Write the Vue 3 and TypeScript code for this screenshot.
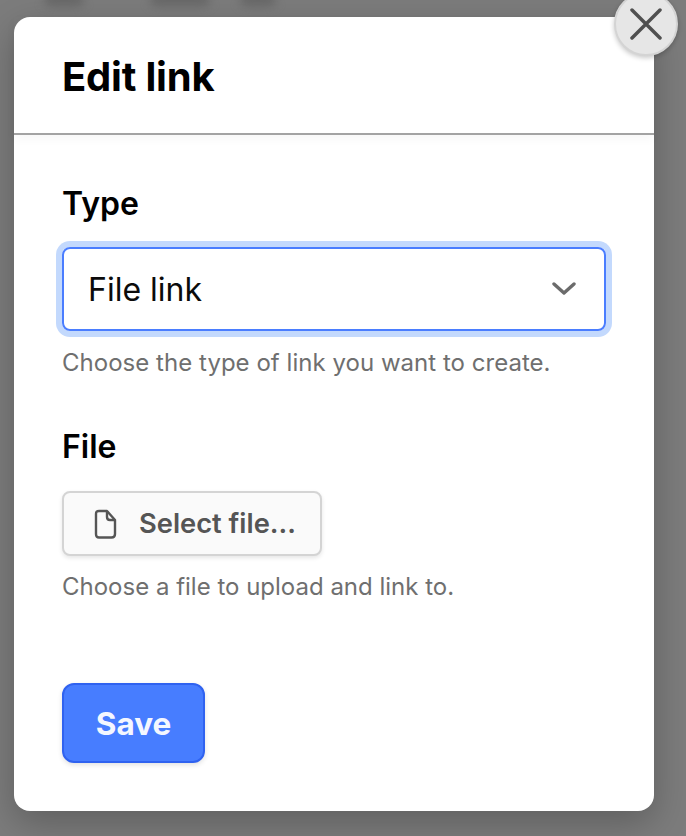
<script setup lang="ts">
const typeHelp = 'Choose the type of link you want to create.'
const fileHelp = 'Choose a file to upload and link to.'
</script>

<template>
  <div class="page">
    <div class="blobs"><i></i><i></i><i></i></div>
    <section class="dialog">
      <button class="close" aria-label="Close">
        <svg width="32" height="32" viewBox="0 0 32 32" fill="none" stroke="#505050" stroke-width="3.5" stroke-linecap="round">
          <path d="M2 2 L30 30 M30 2 L2 30" />
        </svg>
      </button>
      <header class="head"><h1>Edit link</h1></header>
      <div class="body">
        <div class="field">
          <label class="lab">Type</label>
          <div class="select">
            <span>File link</span>
            <svg width="24" height="14" viewBox="0 0 24 14" fill="none" stroke="#6b6b6b" stroke-width="3.4" stroke-linecap="round" stroke-linejoin="round">
              <path d="M2 2 L12 11 L22 2" />
            </svg>
          </div>
          <p class="help">{{ typeHelp }}</p>
        </div>
        <div class="field second">
          <label class="lab">File</label>
          <button class="file">
            <svg width="24" height="30" viewBox="0 0 24 30" fill="none" stroke="#555" stroke-width="2.4" stroke-linejoin="round">
              <path d="M5 2 H13 L21 11 V25 Q21 28.500 17.500 28.500 H5 Q2 28.500 2 25 V5 Q2 2 5 2 Z" />
              <path d="M13 2 V8 Q13 11 16 11 H21" />
            </svg>
            <span>Select file...</span>
          </button>
          <p class="help upload">{{ fileHelp }}</p>
        </div>
        <button class="save">Save</button>
      </div>
    </section>
  </div>
</template>

<style>
html, body { margin: 0; background: #7c7c7c; }
</style>

<style scoped>
.page {
  position: relative;
  height: 836px;
  overflow: hidden;
  box-sizing: border-box;
  padding: 17px 32px 25px 14px;
  background: #7c7c7c;
  font-family: Inter, "Liberation Sans", sans-serif;
}
.blobs { position: absolute; inset: 0; pointer-events: none; }
.blobs i {
  position: absolute;
  top: -8px;
  height: 14px;
  background: #686868;
  border-radius: 8px;
  filter: blur(5px);
}
.blobs i:nth-child(1) { left: 44px; width: 40px; }
.blobs i:nth-child(2) { left: 150px; width: 60px; }
.blobs i:nth-child(3) { left: 240px; width: 36px; }
.dialog {
  position: relative;
  height: 794px;
  background: #fff;
  border-radius: 16px;
  box-shadow: 0 12px 36px rgba(0, 0, 0, 0.24);
  display: flex;
  flex-direction: column;
}
.close {
  position: absolute;
  top: -25px;
  right: -24px;
  width: 64px;
  height: 64px;
  padding: 0;
  border-radius: 50%;
  border: 2px solid #d4d4d4;
  background: #e6e6e6;
  box-shadow: 0 2px 5px rgba(0, 0, 0, 0.22);
  display: flex;
  align-items: center;
  justify-content: center;
  box-sizing: border-box;
  z-index: 1;
}
.head {
  height: 118px;
  box-sizing: border-box;
  border-bottom: 2px solid #a3a3a3;
  padding: 37px 48px 0;
  box-shadow: 0 4px 10px rgba(0, 0, 0, 0.035);
  flex: none;
}
h1 {
  margin: 0;
  font-size: 40px;
  line-height: 46px;
  font-weight: 700;
  color: #000;
  letter-spacing: -0.2px;
}
.body {
  padding: 50px 48px 0;
  display: flex;
  flex-direction: column;
  align-items: flex-start;
}
.field { width: 100%; }
.second { margin-top: 49px; }
.lab {
  display: block;
  font-size: 32px;
  line-height: 38px;
  font-weight: 600;
  color: #000;
  margin-bottom: 24px;
}
.second .lab { margin-bottom: 25px; }
.select {
  width: 544px;
  height: 84px;
  box-sizing: border-box;
  border: 2px solid #4a7dff;
  border-radius: 8px;
  box-shadow: 0 0 0 6px #c3d9fd;
  display: flex;
  align-items: center;
  justify-content: space-between;
  padding: 0 28px 0 24px;
  font-size: 32px;
  color: #0b0b0b;
}
.help {
  margin: 16px 0 0;
  font-size: 24px;
  line-height: 32px;
  color: #6f6f6f;
  letter-spacing: 0.03px;
}
.help.upload { margin-top: 15px; letter-spacing: 0; }
.file {
  width: 260px;
  height: 65px;
  box-sizing: border-box;
  border: 2px solid #d4d4d4;
  border-radius: 8px;
  background: #fafafa;
  box-shadow: 0 2px 4px rgba(0, 0, 0, 0.1);
  display: flex;
  align-items: center;
  gap: 21px;
  padding: 0 0 0 30px;
  font-family: inherit;
  font-size: 27.3px;
  font-weight: 600;
  color: #555;
}
.save {
  margin-top: 80px;
  width: 143px;
  height: 80px;
  box-sizing: border-box;
  border: 2px solid #2f62f0;
  border-radius: 12px;
  background: #477dff;
  box-shadow: 0 2px 5px rgba(0, 0, 0, 0.12);
  color: #f4f7ff;
  font-family: inherit;
  font-size: 31.5px;
  font-weight: 700;
}
</style>
